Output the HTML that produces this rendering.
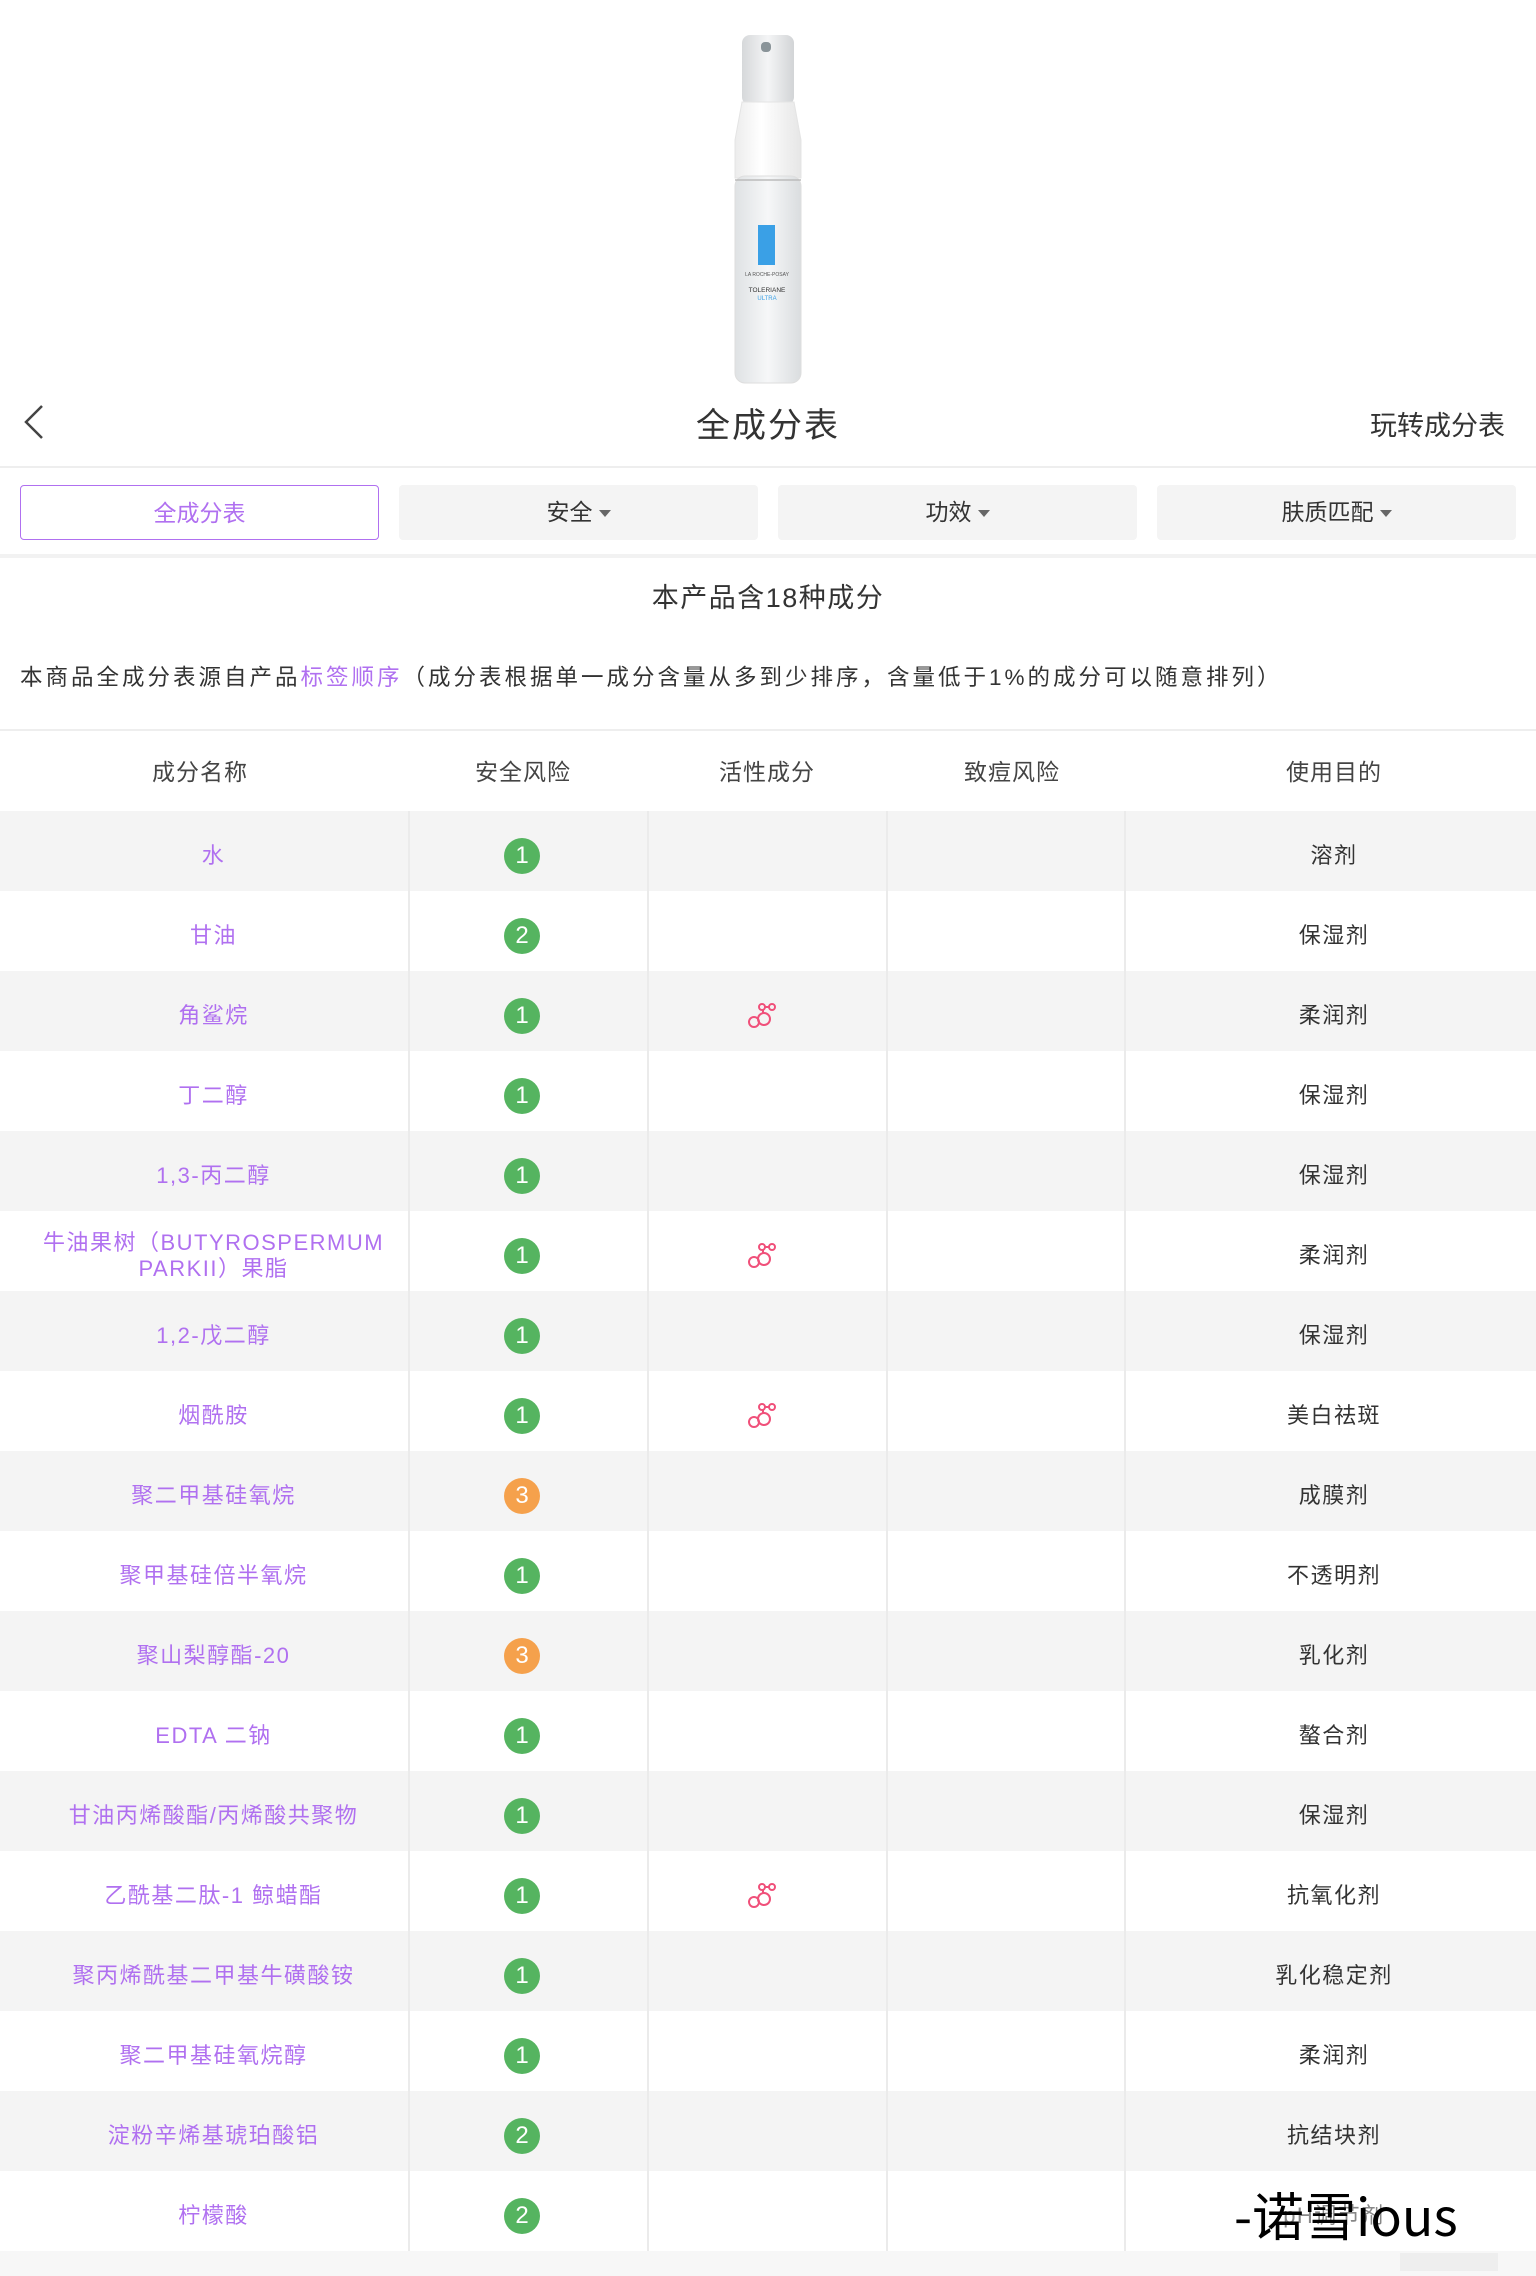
<!DOCTYPE html>
<html><head><meta charset="utf-8"><style>
*{margin:0;padding:0;box-sizing:border-box}
body{width:1536px;height:2276px;background:#fff;position:relative;overflow:hidden;font-family:"Liberation Sans","Noto Sans CJK SC",sans-serif;color:#333}
.a{position:absolute}
.tab{position:absolute;top:485px;height:55px;width:359px;background:#f4f4f4;border-radius:4px;font-size:23px;color:#333;text-align:center;line-height:55px}
.tab i{display:inline-block;width:0;height:0;border-left:6px solid transparent;border-right:6px solid transparent;border-top:7px solid #666;vertical-align:middle;margin-left:6px}
.row{position:absolute;left:0;width:1536px;height:80px;font-size:22px;letter-spacing:1.5px}
.row.g{background:#f4f4f4}
.c{position:absolute;top:5px;height:80px;display:flex;align-items:center;justify-content:center;text-align:center;line-height:26px}
.n{left:0;width:427px;padding:0 30px;color:#b070f0}
.p{left:1125px;width:418px;color:#333}
.b{width:36px;height:36px;border-radius:50%;color:#fff;font-size:24px;line-height:36px;text-align:center;position:absolute;left:504px;top:27px;letter-spacing:0}
.b1,.b2{background:#55b460}.b3{background:#f5a14c}
.v{position:absolute;top:0;width:2px;background:#ebebeb}
.ic{position:absolute;left:748px;top:31px}
.h{position:absolute;top:753px;width:200px;text-align:center;font-size:23px;color:#444;letter-spacing:1px}
</style></head><body>
<svg class="a" style="left:715px;top:30px" width="120" height="360" viewBox="0 0 120 360">
<defs><linearGradient id="cap" x1="0" x2="1"><stop offset="0" stop-color="#d6d8da"/><stop offset=".5" stop-color="#f4f5f6"/><stop offset="1" stop-color="#d2d4d6"/></linearGradient>
<linearGradient id="wh" x1="0" x2="1"><stop offset="0" stop-color="#ececec"/><stop offset=".4" stop-color="#fff"/><stop offset="1" stop-color="#e6e6e6"/></linearGradient>
<linearGradient id="gl" x1="0" x2="1"><stop offset="0" stop-color="#dfe2e4"/><stop offset=".5" stop-color="#f6f7f8"/><stop offset="1" stop-color="#dadddf"/></linearGradient></defs>
<rect x="27" y="5" width="52" height="70" rx="8" fill="url(#cap)"/>
<rect x="46" y="12" width="10" height="10" rx="4" fill="#8a9499"/>
<path d="M27 72 L79 72 L86 110 L86 148 L20 148 L20 110 Z" fill="url(#wh)" stroke="#e4e4e4"/>
<rect x="20" y="146" width="66" height="207" rx="10" fill="url(#gl)" stroke="#dedede"/>
<line x1="20" y1="150" x2="86" y2="150" stroke="#bbb" stroke-width="1.5"/>
<rect x="43" y="195" width="17" height="40" fill="#3aa0e6"/>
<text x="52" y="246" font-size="5" text-anchor="middle" fill="#555">LA ROCHE-POSAY</text>
<text x="52" y="262" font-size="6.5" text-anchor="middle" fill="#333">TOLERIANE</text>
<text x="52" y="270" font-size="6" text-anchor="middle" fill="#3aa0e6">ULTRA</text>
</svg>
<svg class="a" style="left:22px;top:404px" width="24" height="36" viewBox="0 0 24 36"><path d="M20 2 L4 18 L20 34" fill="none" stroke="#444" stroke-width="2.5"/></svg>
<div class="a" style="left:0;width:1536px;top:398px;text-align:center;font-size:34px;color:#333;letter-spacing:2px">全成分表</div>
<div class="a" style="left:1370px;top:404px;font-size:27px;color:#333">玩转成分表</div>
<div class="a" style="left:0;top:466px;width:1536px;height:2px;background:#eee"></div>
<div class="tab" style="left:20px;background:#fff;border:1.5px solid #b070f0;color:#b070f0">全成分表</div>
<div class="tab" style="left:399px">安全<i></i></div>
<div class="tab" style="left:778px">功效<i></i></div>
<div class="tab" style="left:1157px">肤质匹配<i></i></div>
<div class="a" style="left:0;top:554px;width:1536px;height:4px;background:#f2f2f2"></div>
<div class="a" style="left:0;width:1536px;top:576px;text-align:center;font-size:27px;color:#333;letter-spacing:1.5px">本产品含18种成分</div>
<div class="a" style="left:20px;top:660px;font-size:22.5px;color:#333;white-space:nowrap;letter-spacing:3px">本商品全成分表源自产品<span style="color:#b070f0">标签顺序</span>（成分表根据单一成分含量从多到少排序，含量低于1%的成分可以随意排列）</div>
<div class="a" style="left:0;top:729px;width:1536px;height:2px;background:#eee"></div>
<div class="h" style="left:100px">成分名称</div>
<div class="h" style="left:423px">安全风险</div>
<div class="h" style="left:667px">活性成分</div>
<div class="h" style="left:912px">致痘风险</div>
<div class="h" style="left:1234px">使用目的</div>
<div id="t"></div>
<div class="v" style="left:408px;top:811px;height:1442px"></div>
<div class="v" style="left:647px;top:811px;height:1442px"></div>
<div class="v" style="left:886px;top:811px;height:1442px"></div>
<div class="v" style="left:1124px;top:811px;height:1442px"></div>
<div class="a" style="left:0;top:2251px;width:1536px;height:25px;background:#f7f7f7"></div>
<div class="a" style="left:1400px;top:2253px;width:98px;height:18px;background:#eee"></div>
<div class="a" style="left:1234px;top:2182px;font-size:52px;color:#000;font-family:'Noto Sans CJK SC','Liberation Sans',sans-serif;line-height:64px">-诺雪ious</div>
<script>
var d=[["水",1,0,"溶剂"],["甘油",2,0,"保湿剂"],["角鲨烷",1,1,"柔润剂"],["丁二醇",1,0,"保湿剂"],["1,3-丙二醇",1,0,"保湿剂"],["牛油果树（BUTYROSPERMUM PARKII）果脂",1,1,"柔润剂"],["1,2-戊二醇",1,0,"保湿剂"],["烟酰胺",1,1,"美白祛斑"],["聚二甲基硅氧烷",3,0,"成膜剂"],["聚甲基硅倍半氧烷",1,0,"不透明剂"],["聚山梨醇酯-20",3,0,"乳化剂"],["EDTA 二钠",1,0,"螯合剂"],["甘油丙烯酸酯/丙烯酸共聚物",1,0,"保湿剂"],["乙酰基二肽-1 鲸蜡酯",1,1,"抗氧化剂"],["聚丙烯酰基二甲基牛磺酸铵",1,0,"乳化稳定剂"],["聚二甲基硅氧烷醇",1,0,"柔润剂"],["淀粉辛烯基琥珀酸铝",2,0,"抗结块剂"],["柠檬酸",2,0,"<span style='color:#888'>pH调节剂</span>"]];
var ic='<svg class="ic" width="30" height="28" viewBox="0 0 30 28"><g fill="none" stroke="#f0507a" stroke-width="2"><circle cx="6" cy="20" r="5"/><circle cx="16" cy="17" r="6"/><circle cx="14" cy="5" r="3"/><circle cx="24" cy="5" r="3"/><path d="M17 5h4M15 8v3"/></g></svg>';
var h="";d.forEach(function(r,i){h+='<div class="row'+(i%2==0?' g':'')+'" style="top:'+(811+i*80)+'px"><div class="c n">'+r[0]+'</div><div class="b b'+r[1]+'">'+r[1]+'</div>'+(r[2]?ic:'')+'<div class="c p">'+r[3]+'</div></div>'});
document.getElementById('t').innerHTML=h;
</script>
</body></html>
